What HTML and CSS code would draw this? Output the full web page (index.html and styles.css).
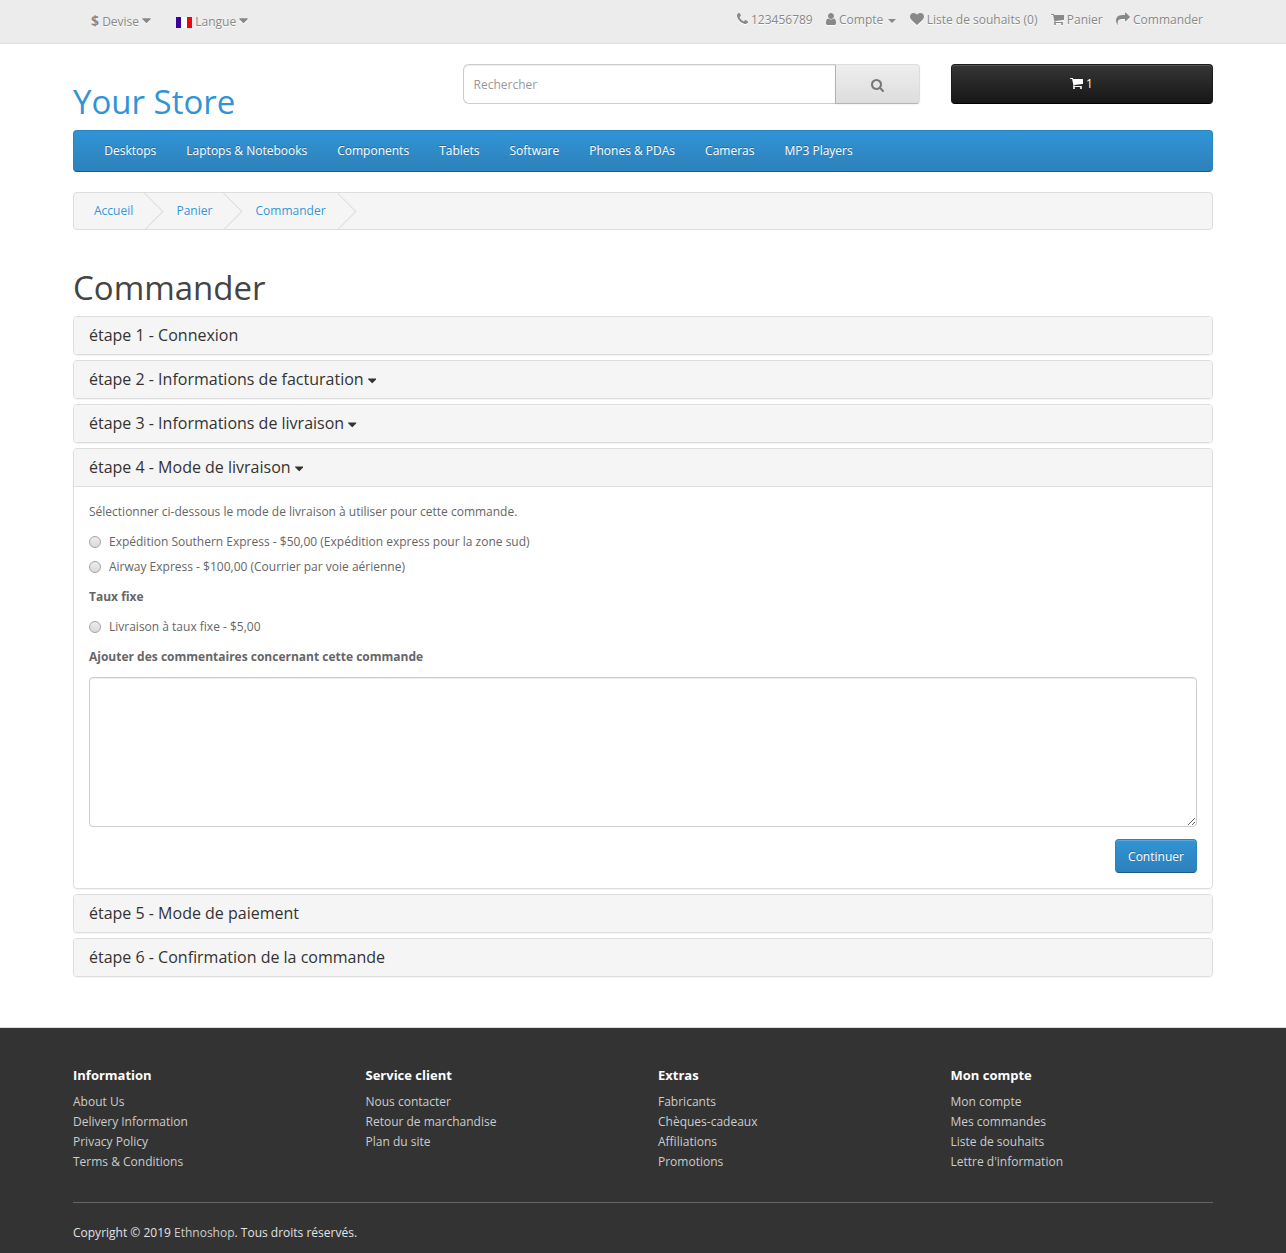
FILE: index.html
```html
<!DOCTYPE html>
<html lang="fr">
<head>
<meta charset="utf-8">
<title>Commander</title>
<link rel="stylesheet" href="styles.css">
</head>
<body>
<svg class="sprite" aria-hidden="true">
  <symbol id="phone" viewBox="192 0 1408 1792"><path d="M1600 1240q0 27-10 70.5t-21 68.5q-21 50-122 106-94 51-186 51-27 0-53-3.5t-57.5-12.5-47-14.5-55.5-20.5-49-18q-98-35-175-83-127-79-264-216t-216-264q-48-77-83-175-3-9-18-49t-20.5-55.5-14.5-47-12.5-57.5-3.5-53q0-92 51-186 56-101 106-122 25-11 68.500-21t70.500-10q14 0 21 3 18 6 53 76 11 19 30 54t35 63.500 31 53.500q3 4 17.500 25t21.500 35.500 7 28.500q0 20-28.500 50t-62 55-62 53-28.500 46q0 9 5 22.500t8.500 20.500 14 24 11.500 19q76 137 174 235t235 174q2 1 19 11.500t24 14 20.500 8.500 22.500 5q18 0 46-28.500t53-62 55-62 50-28.500q14 0 28.500 7t35.500 21.500 25 17.500q25 15 53.500 31t63.500 35 54 30q70 35 76 53 3 7 3 21z"/></symbol>
  <symbol id="user" viewBox="256 0 1280 1792"><path d="M1536 1399q0 109-62.500 187t-150.500 78h-854q-88 0-150.500-78t-62.500-187q0-85 8.500-160.500t31.500-152 58.500-131 94-89 134.500-34.500q131 128 313 128t313-128q76 0 134.500 34.500t94 89 58.500 131 31.500 152 8.500 160.500zm-256-887q0 159-112.500 271.500t-271.500 112.500-271.500-112.500-112.500-271.500 112.500-271.500 271.500-112.500 271.500 112.500 112.500 271.500z"/></symbol>
  <symbol id="heart" viewBox="0 0 1792 1792"><path d="M896 1664q-26 0-44-18l-624-602q-10-8-27.500-26t-55.500-65.500-68-97.500-53.500-121-23.500-138q0-220 127-344t351-124q62 0 126.500 21.500t120 58 95.500 68.500 76 68q36-36 76-68t95.500-68.500 120-58 126.500-21.500q224 0 351 124t127 344q0 221-229 450l-623 600q-18 18-44 18z"/></symbol>
  <symbol id="cart" viewBox="64 0 1664 1792"><path d="M704 1536q0 52-38 90t-90 38-90-38-38-90 38-90 90-38 90 38 38 90zm896 0q0 52-38 90t-90 38-90-38-38-90 38-90 90-38 90 38 38 90zm128-1088v512q0 24-16.500 42.500t-40.500 21.500l-1044 122q13 60 13 70 0 16-24 64h920q26 0 45 19t19 45-19 45-45 19h-1024q-26 0-45-19t-19-45q0-11 8-31.500t16-36 21.500-40 15.500-29.500l-177-823h-204q-26 0-45-19t-19-45 19-45 45-19h256q16 0 28.500 6.500t19.500 15.500 13 24.500 8 26 5.500 29.500 4.500 26h1201q26 0 45 19t19 45z"/></symbol>
  <symbol id="share" viewBox="0 0 1792 1792"><path d="M1792 640q0 26-19 45l-512 512q-19 19-45 19t-45-19-19-45v-256h-224q-98 0-175.500 6t-154 21.500-133 42.500-105.500 69.500-80 101-48.500 138.500-17.500 181q0 55 5 123 0 6 2.500 23.500t2.500 26.500q0 15-8.500 25t-23.500 10q-16 0-28-17-7-9-13-22t-13.500-30-10.500-24q-127-285-127-451 0-199 53-333 162-403 875-403h224v-256q0-26 19-45t45-19 45 19l512 512q19 19 19 45z"/></symbol>
  <symbol id="search" viewBox="64 0 1664 1792"><path d="M1216 832q0-185-131.500-316.500t-316.500-131.500-316.500 131.500-131.500 316.500 131.500 316.500 316.500 131.500 316.500-131.500 131.500-316.500zm512 832q0 52-38 90t-90 38q-54 0-90-38l-343-342q-179 124-399 124-143 0-273.500-55.500t-225-150-150-225-55.500-273.500 55.500-273.500 150-225 225-150 273.500-55.500 273.500 55.500 225 150 150 225 55.500 273.500q0 220-124 399l343 343q37 37 37 90z"/></symbol>
  <symbol id="caret" viewBox="384 0 1024 1792"><path d="M1408 704q0 26-19 45l-448 448q-19 19-45 19t-45-19l-448-448q-19-19-19-45t19-45 45-19h896q26 0 45 19t19 45z"/></symbol>
</svg>

<nav class="top">
  <div class="container top-row">
    <div class="top-left">
      <button class="link-btn"><strong>$</strong> Devise <svg class="icon top-caret"><use href="#caret"/></svg></button>
      <button class="link-btn"><svg class="flag" viewBox="0 0 16 11"><path fill="#fff" d="M0 0h16v11H0z"/><path fill="#39009c" d="M0 0h5v11H0z"/><path fill="#f7000c" d="M11 0h5v11h-5z"/></svg> Langue <svg class="icon top-caret"><use href="#caret"/></svg></button>
    </div>
    <ul class="top-links">
      <li><svg class="icon w11"><use href="#phone"/></svg> 123456789</li>
      <li><svg class="icon w10"><use href="#user"/></svg> Compte <span class="caret"></span></li>
      <li><svg class="icon w14"><use href="#heart"/></svg> Liste de souhaits (0)</li>
      <li><svg class="icon w13"><use href="#cart"/></svg> Panier</li>
      <li><svg class="icon w14"><use href="#share"/></svg> Commander</li>
    </ul>
  </div>
</nav>

<header class="container header">
  <a class="logo">Your Store</a>
  <div class="search">
    <input class="search-input" type="text" placeholder="Rechercher">
    <button class="search-btn"><svg class="icon w13"><use href="#search"/></svg></button>
  </div>
  <button class="cart-btn"><svg class="icon w13"><use href="#cart"/></svg> 1</button>
</header>

<div class="container">
  <nav class="menu">
    <a>Desktops</a><a>Laptops &amp; Notebooks</a><a>Components</a><a>Tablets</a><a>Software</a><a>Phones &amp; PDAs</a><a>Cameras</a><a>MP3 Players</a>
  </nav>
  <ul class="breadcrumb">
    <li>Accueil</li>
    <li>Panier</li>
    <li>Commander</li>
  </ul>

  <main>
    <h1 class="title">Commander</h1>
    <div class="steps">
      <section class="panel"><h4 class="panel-head">étape 1 - Connexion</h4></section>
      <section class="panel"><h4 class="panel-head">étape 2 - Informations de facturation <svg class="icon head-caret"><use href="#caret"/></svg></h4></section>
      <section class="panel"><h4 class="panel-head">étape 3 - Informations de livraison <svg class="icon head-caret"><use href="#caret"/></svg></h4></section>
      <section class="panel">
        <h4 class="panel-head">étape 4 - Mode de livraison <svg class="icon head-caret"><use href="#caret"/></svg></h4>
        <div class="panel-body">
          <p>Sélectionner ci-dessous le mode de livraison à utiliser pour cette commande.</p>
          <div class="options">
            <label class="option"><input class="radio" type="radio" name="shipping">Expédition Southern Express - $50,00 (Expédition express pour la zone sud)</label>
            <label class="option"><input class="radio" type="radio" name="shipping">Airway Express - $100,00 (Courrier par voie aérienne)</label>
          </div>
          <p><strong>Taux fixe</strong></p>
          <label class="option"><input class="radio" type="radio" name="shipping">Livraison à taux fixe - $5,00</label>
          <p><strong>Ajouter des commentaires concernant cette commande</strong></p>
          <textarea class="comment"></textarea>
          <div class="actions"><button class="primary">Continuer</button></div>
        </div>
      </section>
      <section class="panel"><h4 class="panel-head">étape 5 - Mode de paiement</h4></section>
      <section class="panel"><h4 class="panel-head">étape 6 - Confirmation de la commande</h4></section>
    </div>
  </main>
</div>

<footer class="footer">
  <div class="container">
    <div class="footer-cols">
      <div><h5>Information</h5><ul><li>About Us</li><li>Delivery Information</li><li>Privacy Policy</li><li>Terms &amp; Conditions</li></ul></div>
      <div><h5>Service client</h5><ul><li>Nous contacter</li><li>Retour de marchandise</li><li>Plan du site</li></ul></div>
      <div><h5>Extras</h5><ul><li>Fabricants</li><li>Chèques-cadeaux</li><li>Affiliations</li><li>Promotions</li></ul></div>
      <div><h5>Mon compte</h5><ul><li>Mon compte</li><li>Mes commandes</li><li>Liste de souhaits</li><li>Lettre d'information</li></ul></div>
    </div>
    <p class="copyright">Copyright © 2019 <a>Ethnoshop</a>. Tous droits réservés.</p>
  </div>
</footer>
</body>
</html>
```
FILE: styles.css
```css
* { box-sizing: border-box; }
body {
  margin: 0;
  background: #fff;
  color: #666;
  font: 400 12px/20px "Open Sans", sans-serif;
}
ul { list-style: none; margin: 0; padding: 0; }
p, h1, h4, h5 { margin: 0; }
button, input, textarea { font: inherit; }
.sprite { display: none; }
.container { width: 1140px; margin: 0 auto; }

.icon { height: 14px; fill: currentColor; vertical-align: -2px; }
.w10 { width: 10px; }
.w11 { width: 11px; }
.w13 { width: 13px; }
.w14 { width: 14px; }

.top {
  height: 44px;
  background: #ececec;
  border-bottom: 1px solid #dfdfdf;
  color: #888;
  text-shadow: 0 1px 0 #fff;
}
.top .icon { filter: drop-shadow(0 1px 0 #fff); }
.top-row { display: flex; justify-content: space-between; padding: 0 10px 0 18px; }
.top-left { display: flex; gap: 25px; padding-top: 12px; }
.top-caret { width: 9px; height: 15px; }
.link-btn {
  height: 20px;
  padding: 0;
  border: 0;
  background: none;
  color: inherit;
  text-shadow: inherit;
}
.link-btn strong { font-size: 14px; line-height: 1; }
.flag { width: 16px; height: 11px; vertical-align: -2px; }
.top-links { display: flex; gap: 13.200px; padding-top: 10px; }
.caret {
  display: inline-block;
  margin-left: 2px;
  vertical-align: middle;
  border: 4px solid transparent;
  border-top-color: currentColor;
  border-bottom: 0;
}

.header {
  display: grid;
  grid-template-columns: 360px 457px 262px;
  column-gap: 30px;
  justify-content: space-between;
  height: 86px;
  padding-top: 20px;
}
.logo { padding-top: 19px; font-size: 33px; line-height: 38px; color: #3194d5; }
.search { display: flex; height: 40px; margin-left: -1px; margin-right: 1px; }
.search-input {
  flex: 1;
  min-width: 0;
  padding: 1px 10px 0;
  border: 1px solid #ccc;
  border-right: 0;
  border-radius: 6px 0 0 6px;
  background: #fff;
  box-shadow: inset 0 1px 1px rgba(0, 0, 0, .075);
}
.search-input::placeholder { color: #999; }
.search-btn {
  width: 85px;
  padding: 3px 0 0;
  border: 1px solid;
  border-color: #ddd #ddd #b3b3b3 #b3b3b3;
  border-radius: 0 4px 4px 0;
  background: linear-gradient(#eee, #ddd);
  color: #777;
  box-shadow: 0 1px 2px rgba(0, 0, 0, .05);
}
.cart-btn {
  height: 40px;
  padding: 0 1px 0 0;
  border: 1px solid;
  border-color: #1c1c1c #1c1c1c #000;
  border-radius: 4px;
  background: linear-gradient(#363636, #161616);
  color: #fff;
  box-shadow: inset 0 1px 0 rgba(255, 255, 255, .15);
}

.menu {
  display: flex;
  height: 42px;
  padding-left: 15.300px;
  border: 1px solid;
  border-color: #2b83bd #2b83bd #1d5a84;
  border-radius: 4px;
  background: linear-gradient(#3194d5, #2d81bb);
}
.menu a { padding: 10px 15px; color: #fff; text-shadow: 0 -1px 0 rgba(0, 0, 0, .25); }

.breadcrumb {
  display: flex;
  gap: 3.200px;
  height: 38px;
  margin-top: 20px;
  padding: 8px 0;
  overflow: hidden;
  border: 1px solid #ddd;
  border-radius: 4px;
  background: #f5f5f5;
}
.breadcrumb li { position: relative; padding: 0 20px; color: #3194d5; text-shadow: 0 1px 0 #fff; }
.breadcrumb li::after {
  content: "";
  position: absolute;
  top: -3px;
  right: -5px;
  width: 26px;
  height: 26px;
  border-right: 1px solid #ddd;
  border-bottom: 1px solid #ddd;
  transform: rotate(-45deg);
}

.title { margin: 40px 0 10px; font-size: 33px; font-weight: 400; line-height: 36px; color: #444; }
.steps { display: grid; row-gap: 5px; }
.panel { border: 1px solid #ddd; border-radius: 4px; box-shadow: 0 1px 1px rgba(0, 0, 0, .05); }
.panel-head {
  height: 37px;
  padding: 9px 15px;
  border-radius: 3px;
  background: #f5f5f5;
  color: #333;
  font-size: 16px;
  font-weight: 400;
  line-height: 18px;
}
.head-caret { width: 8.500px; height: 15px; vertical-align: -2.500px; }
.panel-body {
  display: grid;
  row-gap: 10px;
  padding: 15px;
  border-top: 1px solid #ddd;
}
.options { display: grid; row-gap: 5px; }
.option { display: flex; align-items: center; gap: 8px; height: 20px; }
.radio {
  appearance: none;
  width: 12px;
  height: 12px;
  margin: 0;
  border: 1px solid #a4a4a4;
  border-radius: 50%;
  background: linear-gradient(#ececec, #dadada);
}
.comment {
  display: block;
  width: 100%;
  height: 150px;
  border: 1px solid #ccc;
  border-radius: 4px;
  box-shadow: inset 0 1px 1px rgba(0, 0, 0, .075);
  resize: vertical;
}
.actions { display: flex; justify-content: flex-end; padding-top: 2px; }
.primary {
  width: 82px;
  height: 34px;
  padding: 2px 0 0;
  border: 1px solid;
  border-color: #2b83bd #2b83bd #1d5a84;
  border-radius: 4px;
  background: linear-gradient(#3194d5, #2d81bb);
  color: #fff;
  text-shadow: 0 -1px 0 rgba(0, 0, 0, .25);
  box-shadow: inset 0 1px 0 rgba(255, 255, 255, .2);
}

.footer { height: 226px; margin-top: 50px; padding-top: 38px; border-top: 1px solid #ddd; background: #333; color: #e2e2e2; }
.footer-cols {
  display: grid;
  grid-template-columns: repeat(4, 1fr);
  column-gap: 30px;
  height: 137px;
  border-bottom: 1px solid #666;
}
.footer h5 { margin-bottom: 8px; font-size: 13px; font-weight: 700; line-height: 18px; color: #fff; }
.footer li, .footer a { color: #ccc; }
.copyright { padding-top: 20px; }
```
